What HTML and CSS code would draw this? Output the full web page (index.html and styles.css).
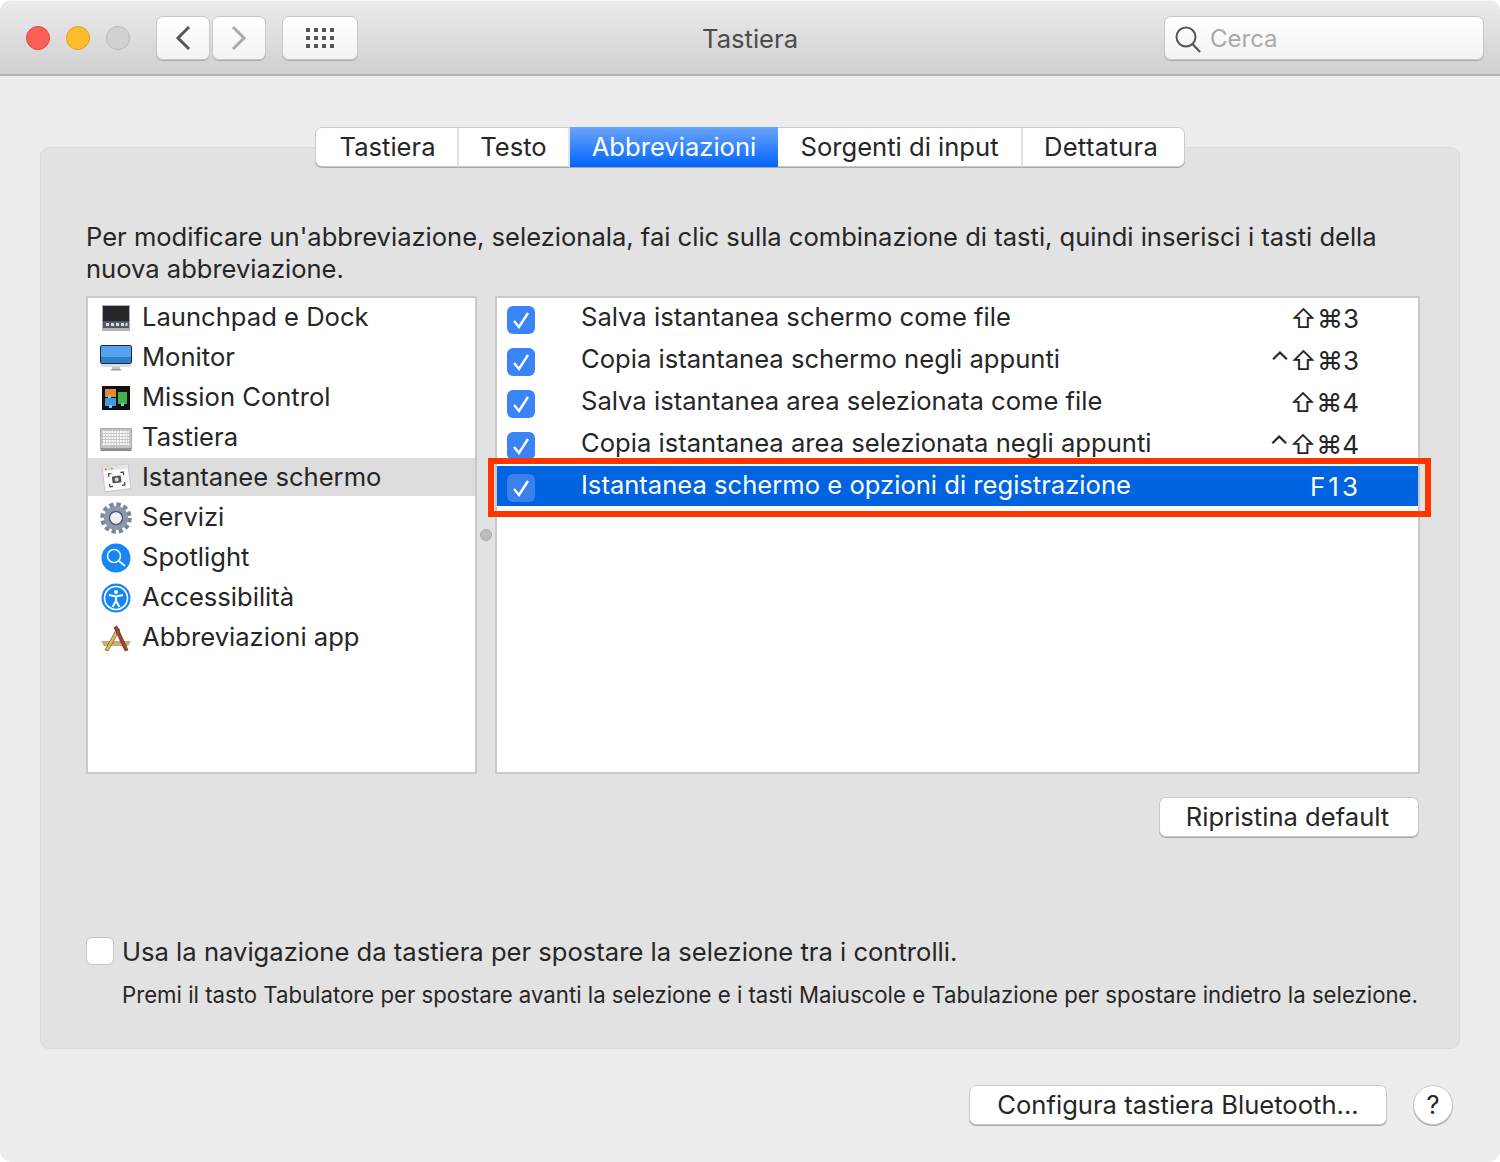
FILE: index.html
```html
<!DOCTYPE html>
<html lang="it">
  <head>
    <meta charset="UTF-8" />
    <title>Tastiera</title>
    <link rel="stylesheet" href="styles.css">
  </head>
  <body>
    <div class="window">
      <header class="titlebar">
        <div class="bar-left">
          <div class="lights">
            <span class="light red"></span>
            <span class="light yellow"></span>
            <span class="light off"></span>
          </div>
          <div class="nav">
            <button class="tool nav-btn">
              <svg width="18" height="26" viewBox="0 0 18 26"><path d="M15 2 L4 13 L15 24" fill="none" stroke="#555" stroke-width="3"/></svg>
            </button>
            <button class="tool nav-btn">
              <svg width="18" height="26" viewBox="0 0 18 26"><path d="M3 2 L14 13 L3 24" fill="none" stroke="#aaa" stroke-width="3"/></svg>
            </button>
          </div>
          <button class="tool grid-btn">
            <svg width="28" height="20" viewBox="0 0 28 20" fill="#555">
              <rect x="0" y="0" width="4" height="4"/><rect x="8" y="0" width="4" height="4"/><rect x="16" y="0" width="4" height="4"/><rect x="24" y="0" width="4" height="4"/>
              <rect x="0" y="8" width="4" height="4"/><rect x="8" y="8" width="4" height="4"/><rect x="16" y="8" width="4" height="4"/><rect x="24" y="8" width="4" height="4"/>
              <rect x="0" y="16" width="4" height="4"/><rect x="8" y="16" width="4" height="4"/><rect x="16" y="16" width="4" height="4"/><rect x="24" y="16" width="4" height="4"/>
            </svg>
          </button>
        </div>
        <div class="title">Tastiera</div>
        <div class="bar-right">
          <div class="tool search">
            <svg width="26" height="28" viewBox="0 0 26 28"><circle cx="11" cy="11" r="9.5" fill="none" stroke="#555" stroke-width="2"/><path d="M17.5 18 L25 26" stroke="#555" stroke-width="2.2"/></svg>
            <span class="placeholder">Cerca</span>
          </div>
        </div>
      </header>

      <main class="content">
        <section class="panel">
          <nav class="tabs">
            <div class="tab first">Tastiera</div>
            <div class="tab">Testo</div>
            <div class="tab active">Abbreviazioni</div>
            <div class="tab">Sorgenti di input</div>
            <div class="tab last">Dettatura</div>
          </nav>

          <p class="intro">Per modificare un'abbreviazione, selezionala, fai clic sulla combinazione di tasti, quindi inserisci i tasti della nuova abbreviazione.</p>

          <div class="lists">
            <ul class="list cats">
              <li class="cat">
                <svg class="cat-icon" width="32" height="28" viewBox="0 0 32 28">
                  <rect x="2.5" y="1.5" width="27" height="23" fill="#26262a" stroke="#a9aeb4"/>
                  <rect x="3" y="17" width="26" height="7" fill="#565a60"/>
                  <path d="M6 19h3v3H6zM11 19h3v3h-3zM16 19h3v3h-3zM21 19h3v3h-3zM25.5 19h2v3h-2z" fill="#d5dbe2"/>
                  <rect x="2" y="25" width="28" height="2" fill="#b5b5b5"/>
                </svg>
                Launchpad e Dock
              </li>
              <li class="cat">
                <svg class="cat-icon" width="32" height="28" viewBox="0 0 32 28">
                  <rect x="0.5" y="1.5" width="31" height="18" rx="1.5" fill="#56a3ec" stroke="#1c2733"/>
                  <rect x="1" y="13" width="30" height="6" fill="#2f7fd0"/>
                  <rect x="1" y="20" width="30" height="3" fill="#dcdcdc"/>
                  <rect x="12" y="23" width="8" height="2" fill="#c4c4c4"/>
                  <rect x="11" y="25" width="10" height="1.5" fill="#9c9c9c"/>
                </svg>
                Monitor
              </li>
              <li class="cat">
                <svg class="cat-icon" width="32" height="28" viewBox="0 0 32 28">
                  <rect x="2" y="2" width="28" height="24" fill="#111"/>
                  <rect x="5" y="5" width="11" height="8" fill="#e58a2b"/>
                  <rect x="5" y="14" width="11" height="8" fill="#3f9be0"/>
                  <rect x="18" y="8" width="9" height="12" fill="#3fb54a"/>
                  <rect x="8" y="11" width="3" height="3" fill="#7cc4f5"/>
                  <rect x="9" y="21" width="3" height="3" fill="#7cc4f5"/>
                  <rect x="21" y="19" width="3" height="3" fill="#7cc4f5"/>
                </svg>
                Mission Control
              </li>
              <li class="cat">
                <svg class="cat-icon" width="32" height="28" viewBox="0 0 32 28">
                  <rect x="0.5" y="4.5" width="31" height="20" fill="#c4c4c4" stroke="#a8a8a8"/>
                  <path d="M3 8h26M3 11h26M3 14h26M3 17h26M3 20h26" stroke="#fff" stroke-width="2" stroke-dasharray="2 0.8"/>
                  <rect x="0.5" y="24.5" width="31" height="2.5" fill="#8e8e8e"/>
                </svg>
                Tastiera
              </li>
              <li class="cat selected">
                <svg class="cat-icon" width="32" height="30" viewBox="0 0 32 30">
                  <g transform="rotate(-7 16 15)">
                    <rect x="3.5" y="2.5" width="26" height="25" fill="#fcfcfc" stroke="#c8c8c8"/>
                    <rect x="4" y="3" width="25" height="4" fill="#e4e4e4"/>
                    <circle cx="7" cy="5" r="1" fill="#f0625a"/><circle cx="10" cy="5" r="1" fill="#f3bd3c"/><circle cx="13" cy="5" r="1" fill="#5cc05c"/>
                    <path d="M9 13v-3h3M21 10h3v3M24 20v3h-3M12 23H9v-3" fill="none" stroke="#444" stroke-width="1.2"/>
                    <rect x="12" y="13" width="9" height="7" rx="1" fill="#555"/>
                    <circle cx="16.5" cy="16.5" r="2" fill="#ddd"/>
                  </g>
                </svg>
                Istantanee schermo
              </li>
              <li class="cat">
                <svg class="cat-icon" width="32" height="32" viewBox="0 0 32 32">
                  <circle cx="16" cy="16" r="13.5" fill="none" stroke="#7b859b" stroke-width="4.5" stroke-dasharray="4.2 2.87"/>
                  <circle cx="16" cy="16" r="9" fill="none" stroke="#8d97ac" stroke-width="6"/>
                  <circle cx="16" cy="16" r="6.5" fill="none" stroke="#525c70" stroke-width="1.5"/>
                  <circle cx="16" cy="16" r="5.5" fill="#eef0f4"/>
                </svg>
                Servizi
              </li>
              <li class="cat">
                <svg class="cat-icon" width="32" height="30" viewBox="0 0 32 30">
                  <circle cx="16" cy="15" r="14.5" fill="#1685f5"/>
                  <circle cx="14" cy="13" r="6.5" fill="none" stroke="#e8f3ff" stroke-width="1.6"/>
                  <path d="M19 18 L25 23" stroke="#e8f3ff" stroke-width="2"/>
                </svg>
                Spotlight
              </li>
              <li class="cat">
                <svg class="cat-icon" width="32" height="30" viewBox="0 0 32 30">
                  <circle cx="16" cy="15" r="14.5" fill="#1685f5"/>
                  <circle cx="16" cy="15" r="11.5" fill="none" stroke="#fff" stroke-width="1.6"/>
                  <circle cx="16" cy="9" r="2" fill="#fff"/>
                  <path d="M9 12 L16 13.5 L23 12 M16 13 V18 M16 18 L12.5 24 M16 18 L19.5 24" fill="none" stroke="#fff" stroke-width="2"/>
                </svg>
                Accessibilità
              </li>
              <li class="cat">
                <svg class="cat-icon" width="32" height="30" viewBox="0 0 32 30">
                  <path d="M1 18 H31 L28 23 H4 Z" fill="#c9ab78"/>
                  <path d="M5 27 L17 5 L20 6.5 L8 28 Z" fill="#e6b84a" stroke="#444" stroke-width="0.6"/>
                  <path d="M28 27 L17 3 L14 4.5 L25 28 Z" fill="#a5402f" stroke="#333" stroke-width="0.6"/>
                </svg>
                Abbreviazioni app
              </li>
            </ul>

            <div class="splitter"><span class="grip"></span></div>

            <div class="list shortcuts">
              <div class="shortcut">
                <span class="check"><svg width="20" height="20" viewBox="0 0 20 20"><path d="M3 11 L8 17 L17 3" fill="none" stroke="#fff" stroke-width="2.4"/></svg></span>
                <span class="name">Salva istantanea schermo come file</span>
                <span class="keys">⇧⌘3</span>
              </div>
              <div class="shortcut">
                <span class="check"><svg width="20" height="20" viewBox="0 0 20 20"><path d="M3 11 L8 17 L17 3" fill="none" stroke="#fff" stroke-width="2.4"/></svg></span>
                <span class="name">Copia istantanea schermo negli appunti</span>
                <span class="keys">⌃⇧⌘3</span>
              </div>
              <div class="shortcut">
                <span class="check"><svg width="20" height="20" viewBox="0 0 20 20"><path d="M3 11 L8 17 L17 3" fill="none" stroke="#fff" stroke-width="2.4"/></svg></span>
                <span class="name">Salva istantanea area selezionata come file</span>
                <span class="keys">⇧⌘4</span>
              </div>
              <div class="shortcut">
                <span class="check"><svg width="20" height="20" viewBox="0 0 20 20"><path d="M3 11 L8 17 L17 3" fill="none" stroke="#fff" stroke-width="2.4"/></svg></span>
                <span class="name">Copia istantanea area selezionata negli appunti</span>
                <span class="keys">⌃⇧⌘4</span>
              </div>
              <div class="shortcut selected">
                <span class="check"><svg width="20" height="20" viewBox="0 0 20 20"><path d="M3 11 L8 17 L17 3" fill="none" stroke="#fff" stroke-width="2.4"/></svg></span>
                <span class="name">Istantanea schermo e opzioni di registrazione</span>
                <span class="keys fn">F13</span>
              </div>
              <div class="highlight"></div>
            </div>
          </div>

          <div class="restore-row">
            <button class="btn restore">Ripristina default</button>
          </div>

          <label class="option">
            <span class="box"></span>
            Usa la navigazione da tastiera per spostare la selezione tra i controlli.
          </label>
          <p class="hint">Premi il tasto Tabulatore per spostare avanti la selezione e i tasti Maiuscole e Tabulazione per spostare indietro la selezione.</p>
        </section>

        <footer class="footer">
          <button class="btn bluetooth">Configura tastiera Bluetooth...</button>
          <button class="btn help">?</button>
        </footer>
      </main>
    </div>
  </body>
</html>
```

FILE: styles.css
```css
* {
  margin: 0;
  padding: 0;
  box-sizing: border-box;
}
html {
  background: #fff;
}
body {
  font-family: Inter, "Liberation Sans", "DejaVu Sans", sans-serif;
  font-size: 25.6px;
  color: #262626;
}
button {
  font: inherit;
  color: inherit;
}
ul {
  list-style-type: none;
}

.window {
  width: 1500px;
  height: 1162px;
  background: #ececec;
  border-radius: 12px;
  overflow: hidden;
}

/* barra del titolo */
.titlebar {
  display: grid;
  grid-template-columns: 1fr auto 1fr;
  align-items: center;
  height: 76px;
  padding: 2px 16px 0;
  background: linear-gradient(#ebebeb, #d0d0d0);
  border-bottom: 2px solid #b5b5b5;
  box-shadow: inset 0 1px 0 #f6f6f6;
}
.bar-left {
  display: flex;
  align-items: center;
}
.bar-right {
  display: flex;
  justify-content: flex-end;
}
.title {
  color: #4b4b4b;
  line-height: 30px;
  padding-top: 2px;
}
.lights {
  display: flex;
  gap: 16px;
  margin: 0 26px 0 10px;
}
.light {
  width: 24px;
  height: 24px;
  border-radius: 50%;
  border: 1px solid;
}
.red {
  background: #fc5f57;
  border-color: #e0443e;
}
.yellow {
  background: #fdbc2d;
  border-color: #dfa023;
}
.off {
  background: #d1d1d1;
  border-color: #b9b9b9;
}
.tool {
  height: 44px;
  background: linear-gradient(#fff, #f3f3f3);
  border: 1px solid #c6c6c6;
  border-radius: 7px;
  box-shadow: 0 1px 0 #aaa;
  display: flex;
  align-items: center;
  justify-content: center;
}
.nav {
  display: flex;
  gap: 2px;
  margin-right: 16px;
}
.nav-btn {
  width: 54px;
}
.grid-btn {
  width: 76px;
}
.search {
  width: 320px;
  justify-content: flex-start;
  padding-left: 10px;
  gap: 9px;
  font-size: 24px;
}
.search svg {
  margin-top: 4px;
}
.placeholder {
  color: #a9a9a9;
}

/* pannello */
.content {
  padding: 0 40px;
}
.panel {
  margin-top: 71px;
  height: 902px;
  padding: 0 40px 0 45px;
  background: #e2e2e2;
  border: 1px solid #dadada;
  border-radius: 9px;
}
.tabs {
  display: grid;
  grid-template-columns: 143px 111px 208px 245px 161px;
  width: 870px;
  height: 40px;
  margin: -21px 0 0 229px;
  background: #fff;
  border: 1px solid #cacaca;
  border-radius: 7px;
  box-shadow: 0 1px 0 #a9a9a9;
}
.tab {
  line-height: 37px;
  text-align: center;
  border-right: 2px solid #e4e4e4;
}
.tab.first {
  padding-left: 2px;
}
.tab.active {
  color: #fff;
  background: linear-gradient(#6aa4fb, #0065fd);
  border-right: 0;
  margin-top: -1px;
  height: 40px;
  line-height: 39px;
}
.tab.last {
  border-right: 0;
  letter-spacing: 0.3px;
  padding-right: 5px;
}

.intro {
  margin-top: 54px;
  line-height: 32px;
  width: 1310px;
  font-size: 25.55px;
}

.lists {
  display: flex;
  margin-top: 11px;
  height: 478px;
  width: 1334px;
}
.list {
  background: #fff;
  border: 2px solid #c9c9c9;
}
.cats {
  width: 391px;
}
.cat {
  display: flex;
  align-items: center;
  height: 40px;
  padding: 0 0 4px 12px;
}
.cat.selected {
  background: #dcdcdc;
  height: 38px;
  margin-bottom: 2px;
  padding-bottom: 2px;
}
.cat-icon {
  flex: none;
  width: 32px;
  margin: 4px 10px 0 0;
}
.splitter {
  width: 18px;
  display: flex;
  align-items: center;
  justify-content: center;
}
.grip {
  width: 12px;
  height: 12px;
  border-radius: 50%;
  background: #bdbdbd;
  border: 1px solid #a8a8a8;
}
.shortcuts {
  position: relative;
  width: 925px;
}
.shortcut {
  display: flex;
  height: 42px;
  padding: 0 59px 0 10px;
}
.name {
  flex: 1;
  line-height: 38px;
  margin-left: 46px;
}
.keys {
  line-height: 42px;
  font-size: 26px;
}
.keys.fn {
  letter-spacing: 3px;
  margin-right: -2px;
}
.check {
  flex: none;
  width: 28px;
  height: 28px;
  margin-top: 8px;
  background: #3b84f8;
  border-radius: 6px;
  display: flex;
  align-items: center;
  justify-content: center;
}
.shortcut.selected {
  height: 40px;
  color: #fff;
  background: #0064e1;
}
.selected .check {
  background: #3a81ec;
}
/* riquadro rosso sopra la riga */
.highlight {
  position: absolute;
  left: -9px;
  right: -13px;
  top: 160px;
  height: 59px;
  border: 6px solid #ff3500;
}

.restore-row {
  display: flex;
  justify-content: flex-end;
  width: 1333px;
  margin-top: 23px;
}
.btn {
  height: 40px;
  padding-bottom: 2px;
  background: #fff;
  border: 1px solid #cacaca;
  border-radius: 7px;
  box-shadow: 0 1px 0 #a9a9a9;
}
.restore {
  width: 260px;
  padding-right: 3px;
}
.option {
  display: flex;
  align-items: center;
  gap: 8px;
  height: 28px;
  margin-top: 100px;
}
.box {
  width: 28px;
  height: 28px;
  background: #fff;
  border: 1px solid #c4c4c4;
  border-radius: 6px;
}
.hint {
  margin: 15px 0 0 36px;
  line-height: 30px;
  font-size: 22.2px;
  white-space: nowrap;
}

.footer {
  display: flex;
  justify-content: flex-end;
  gap: 26px;
  margin-top: 36px;
  padding-right: 7px;
}
.bluetooth {
  width: 418px;
}
.help {
  width: 40px;
  border-radius: 50%;
}
```
